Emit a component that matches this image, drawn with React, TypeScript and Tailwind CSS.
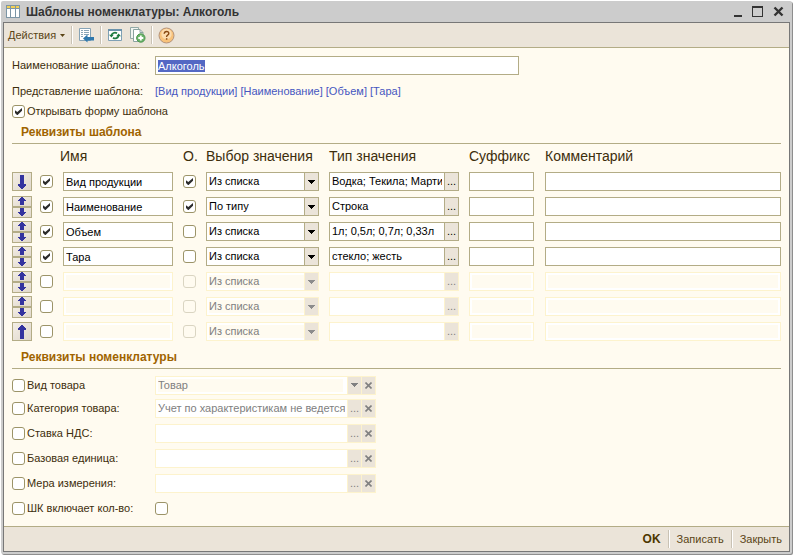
import { useEffect, useRef } from "react";
import clsx from "clsx";

interface TemplateRow {
  id: number;
  name: string;
  used: boolean;
  required: boolean;
  choice: string;
  type: string;
  disabled?: boolean;
}

interface ItemProp {
  label: string;
  value: string;
  picker: "list" | "dots";
}

const rows: TemplateRow[] = [
  { id: 1, name: "Вид продукции", used: true, required: true, choice: "Из списка", type: "Водка; Текила; Мартини" },
  { id: 2, name: "Наименование", used: true, required: true, choice: "По типу", type: "Строка" },
  { id: 3, name: "Объем", used: true, required: false, choice: "Из списка", type: "1л; 0,5л; 0,7л; 0,33л" },
  { id: 4, name: "Тара", used: true, required: false, choice: "Из списка", type: "стекло; жесть" },
  { id: 5, name: "", used: false, required: false, choice: "Из списка", type: "", disabled: true },
  { id: 6, name: "", used: false, required: false, choice: "Из списка", type: "", disabled: true },
  { id: 7, name: "", used: false, required: false, choice: "Из списка", type: "", disabled: true },
];

const itemProps: ItemProp[] = [
  { label: "Вид товара", value: "Товар", picker: "list" },
  { label: "Категория товара:", value: "Учет по характеристикам не ведется", picker: "dots" },
  { label: "Ставка НДС:", value: "", picker: "dots" },
  { label: "Базовая единица:", value: "", picker: "dots" },
  { label: "Мера измерения:", value: "", picker: "dots" },
];

const border = "border-[#b3ac86]";
const borderOff = "border-[#fdf3cd]";

function Triangle() {
  return (
    <svg width="7" height="4" viewBox="0 0 7 4" fill="currentColor" shapeRendering="crispEdges">
      <path d="M0 0h7v1H0zM1 1h5v1H1zM2 2h3v1H2zM3 3h1v1H3z" />
    </svg>
  );
}

function Cross() {
  return (
    <svg width="7" height="7" viewBox="0 0 7 7" fill="none" stroke="currentColor" strokeWidth="1.6">
      <path d="M.5.5l6 6M6.5.5l-6 6" />
    </svg>
  );
}

function CheckBox({ id, label, checked, disabled }: { id: string; label?: string; checked?: boolean; disabled?: boolean }) {
  return (
    <span className="relative block h-[13px] w-[13px] shrink-0">
      <input
        id={id}
        type="checkbox"
        aria-label={label}
        defaultChecked={checked}
        disabled={disabled}
        className="peer block h-[13px] w-[13px] appearance-none rounded-[3px] border border-[#9c9468] bg-white disabled:border-[#dad5c2] disabled:bg-[#fffbf0]"
      />
      <svg
        className="pointer-events-none absolute inset-0 hidden peer-checked:block"
        width="13"
        height="13"
        viewBox="0 0 13 13"
        fill="#2b2b2b"
      >
        <path d="M3 5.2l2.3 1.9L10 3v2.8L5.6 10H5L3 8z" />
      </svg>
    </span>
  );
}

// Solid blue arrow of the row move buttons
function MoveArrow({ dir, small }: { dir: "up" | "down"; small?: boolean }) {
  const h = small ? 8 : 14;
  const d = small
    ? "M3 0h2v1h1v1h1v1h1v1H6v4H2V4H0V3h1V2h1V1h1z"
    : "M3 0h2v1h1v1h1v1h1v2H6v9H2V5H0V3h1V2h1V1h1z";
  return (
    <svg
      width="8"
      height={h}
      viewBox={`0 0 8 ${h}`}
      fill="#33339f"
      className={dir === "down" ? "rotate-180" : ""}
    >
      <path d={d} />
    </svg>
  );
}

function MoveButton({ dir, small }: { dir: "up" | "down"; small?: boolean }) {
  return (
    <button
      type="button"
      aria-label={dir === "up" ? "Переместить вверх" : "Переместить вниз"}
      className={clsx(
        "flex w-5 items-center justify-center border border-[#b3ac86] bg-gradient-to-br from-[#f3eee6] to-[#e0d8cb]",
        small ? "h-[11px]" : "h-[19px]"
      )}
    >
      <MoveArrow dir={dir} small={small} />
    </button>
  );
}

function Moves({ index }: { index: number }) {
  if (index === 0) return <MoveButton dir="down" />;
  if (index === rows.length - 1) return <MoveButton dir="up" />;
  return (
    <div className="flex flex-col">
      <MoveButton dir="up" small />
      <MoveButton dir="down" small />
    </div>
  );
}

function TextField({ label, value, disabled }: { label: string; value?: string; disabled?: boolean }) {
  return (
    <input
      type="text"
      aria-label={label}
      defaultValue={value}
      disabled={disabled}
      className={clsx(
        "block h-[19px] w-full border px-[2px] text-black outline-none",
        disabled ? "bg-[#fffbf0] shadow-[inset_0_0_0_2px_white]" : "bg-white",
        disabled ? borderOff : border
      )}
    />
  );
}

function ChoiceField({ label, value, disabled }: { label: string; value: string; disabled?: boolean }) {
  return (
    <div className="relative">
      <select
        aria-label={label}
        defaultValue={value}
        disabled={disabled}
        className={clsx(
          "block h-[19px] w-full appearance-none border pl-[2px] pr-4 outline-none",
          disabled
            ? "bg-[#fffbf0] text-[#808080] opacity-100 shadow-[inset_0_0_0_2px_white]"
            : "bg-white text-black",
          disabled ? borderOff : border
        )}
      >
        <option>Из списка</option>
        <option>По типу</option>
      </select>
      <span
        className={clsx(
          "pointer-events-none absolute inset-y-px right-px flex w-[14px] items-center justify-center border-l bg-[#ebe4d9]",
          disabled ? "text-[#8c8c8c]" : "text-black",
          disabled ? borderOff : border
        )}
      >
        <Triangle />
      </span>
    </div>
  );
}

interface PickerProps {
  label: string;
  value: string;
  disabled?: boolean;
  picker?: "list" | "dots";
  clearable?: boolean;
}

function PickerField({ label, value, disabled, picker = "dots", clearable }: PickerProps) {
  const tone = disabled ? borderOff : border;
  const button = clsx(
    "flex w-[14px] shrink-0 items-center justify-center border-l bg-[#ebe4d9]",
    disabled ? "text-[#808080]" : "text-black",
    tone
  );
  return (
    <div className={clsx("flex h-[19px] border bg-white", tone)}>
      <input
        type="text"
        aria-label={label}
        defaultValue={value}
        disabled={disabled}
        className={clsx(
          "min-w-0 flex-1 border-r-2 border-white pl-[2px] outline-none",
          disabled ? "text-[#808080]" : "text-black",
          picker === "list" && "bg-[#fffbf0] shadow-[inset_0_0_0_2px_white]"
        )}
      />
      <button type="button" disabled={disabled} aria-label="Выбрать" className={button}>
        {picker === "list" ? <Triangle /> : "..."}
      </button>
      {clearable && (
        <button type="button" disabled={disabled} aria-label="Очистить" className={button}>
          <Cross />
        </button>
      )}
    </div>
  );
}

function Divider() {
  return <span className="h-[18px] w-[2px] shrink-0 border-r border-white bg-[#c9c2b4]" />;
}

function SectionTitle({ children }: { children: string }) {
  return (
    <h2 className="h-5 border-b border-[#b3ac86] pl-[9px] text-[12px] leading-4 font-bold text-[#a06400]">{children}</h2>
  );
}

function TitleBar() {
  return (
    <header className="flex h-[21px] items-center pr-[6px] pl-[3px] text-[#333333]">
      <svg width="14" height="13" viewBox="0 0 14 13" shapeRendering="crispEdges">
        <path fill="#7d96a6" d="M0 0h14v13H0z" />
        <path fill="#ffffff" d="M1 4h3v8H1zM5 4h4v8H5zM10 4h3v8h-3z" />
        <path fill="#f3cf55" d="M1 1h3v2H1zM5 1h4v2H5zM10 1h3v2h-3z" />
      </svg>
      <h1 className="ml-[6px] flex-1 text-[12px] leading-4 font-bold">Шаблоны номенклатуры: Алкоголь</h1>
      <div className="flex items-center gap-[10px]">
        <button type="button" aria-label="Свернуть" className="flex h-[11px] w-2 items-end">
          <span className="h-[2px] w-full bg-[#333333]" />
        </button>
        <button type="button" aria-label="Развернуть" className="h-[11px] w-[11px] border border-t-2 border-[#333333]" />
        <button type="button" aria-label="Закрыть окно">
          <svg width="11" height="11" viewBox="0 0 11 11" stroke="#333333" strokeWidth="2.4">
            <path d="M1.5 1.5l8 8M9.5 1.5l-8 8" />
          </svg>
        </button>
      </div>
    </header>
  );
}

function Toolbar() {
  return (
    <div className="flex h-[25px] items-center border-b border-[#b3ac86] bg-[#ebe4d9] pl-1 text-[#5a4416]">
      <button type="button" className="flex items-center gap-1">
        Действия
        <svg width="5" height="3" viewBox="0 0 5 3" fill="currentColor">
          <path d="M0 0h5L2.5 3z" />
        </svg>
      </button>
      <span className="ml-[6px] flex items-center gap-[5px]">
        <Divider />
        <button type="button" aria-label="Записать и закрыть">
          <svg width="17" height="16" viewBox="0 0 17 16">
            <path d="M1.5 1.500h11v12h-11z" fill="#fff" stroke="#86a3b6" />
            <path d="M3 3.500h2M6 3.500h5M3 5.500h2M6 5.500h5M3 7.500h2M6 7.500h5M3 9.500h2" stroke="#8aa6b8" />
            <path d="M5 11.500l4.500-4V10H16v3.500H9.500V15.500z" fill="#2f78ad" />
          </svg>
        </button>
        <Divider />
        <button type="button" aria-label="Обновить">
          <svg width="16" height="16" viewBox="0 0 16 16">
            <path d="M1.500 2.500h13v11h-13z" fill="#fff" stroke="#7fa0b5" />
            <path d="M1 2h14v2H1z" fill="#6b93ac" />
            <path d="M4.500 8.500A3.400 3 0 0 1 10 6.300M11.500 8.500A3.400 3 0 0 1 6 10.800" fill="none" stroke="#1c7a3e" strokeWidth="1.700" />
            <path d="M2 7.800h4.800L4.400 10.400zM9.200 9.200H14L11.600 6.600z" fill="#1c7a3e" />
          </svg>
        </button>
        <button type="button" aria-label="Добавить копированием" className="ml-[2px]">
          <svg width="16" height="16" viewBox="0 0 16 16">
            <path d="M.5.5h8v11h-8z" fill="#f1f5f1" stroke="#93aaa6" />
            <path d="M3.500 2.500h6.500l3 3v9h-9.500z" fill="#fff" stroke="#8aa39f" />
            <path d="M10 2.500v3h3" fill="none" stroke="#8aa39f" />
            <circle cx="10.800" cy="11" r="4.200" fill="#6bb46a" stroke="#4d9650" />
            <path d="M10.800 8.500v5M8.300 11h5" stroke="#fff" strokeWidth="1.800" />
          </svg>
        </button>
        <Divider />
        <button type="button" aria-label="Справка">
          <svg width="17" height="17" viewBox="0 0 17 17">
            <circle cx="8.500" cy="8.500" r="7.500" fill="#f8c27a" stroke="#b3937c" />
            <circle cx="8.500" cy="7" r="5.200" fill="#fcdcae" />
            <path d="M6.200 6.800q.2-2.300 2.400-2.300t2.200 1.900q0 1-1.200 1.700T8.600 10" fill="none" stroke="#8a4a12" strokeWidth="1.400" />
            <path d="M7.900 11.200h1.500v1.500H7.900z" fill="#8a4a12" />
          </svg>
        </button>
      </span>
    </div>
  );
}

export default function App() {
  const nameRef = useRef<HTMLInputElement>(null);

  // The form opens with the template name selected for editing
  useEffect(() => {
    nameRef.current?.focus();
    nameRef.current?.select();
  }, []);

  return (
    <div className="flex min-h-screen flex-col bg-white p-px font-['Liberation_Sans',Arial,sans-serif] text-[11px] leading-[13px] text-[#3d2e0c]">
      <div className="flex flex-1 flex-col rounded-[2px] bg-[#cccccc] px-[2px] pb-[2px] shadow-[1px_1px_0_#8e8e8e]">
        <TitleBar />
        <div className="flex flex-1 flex-col border border-[#777777] bg-[#fffbf0]">
          <Toolbar />

          <main className="flex-1 px-2 pt-2 pb-[5px]">
            <div className="flex items-center">
              <label htmlFor="template-name" className="w-[143px] shrink-0">
                Наименование шаблона:
              </label>
              <input
                id="template-name"
                ref={nameRef}
                type="text"
                defaultValue="Алкоголь"
                className="h-[19px] w-[364px] border border-[#b3ac86] bg-white px-[2px] text-black outline-none selection:bg-[#5468c4] selection:text-white"
              />
            </div>
            <div className="mt-2 flex h-4 items-center">
              <span className="w-[143px] shrink-0">Представление шаблона:</span>
              <a href="#template" className="text-[#4657c0]">
                [Вид продукции] [Наименование] [Объем] [Тара]
              </a>
            </div>
            <div className="mt-1 flex h-4 items-center gap-[2px]">
              <CheckBox id="open-form" checked />
              <label htmlFor="open-form">Открывать форму шаблона</label>
            </div>

            <section className="mt-[5px]">
              <SectionTitle>Реквизиты шаблона</SectionTitle>
              <table className="w-full table-fixed border-collapse">
                <colgroup>
                  <col className="w-7" />
                  <col className="w-[23px]" />
                  <col className="w-[120px]" />
                  <col className="w-[23px]" />
                  <col className="w-[123px]" />
                  <col className="w-[140px]" />
                  <col className="w-[76px]" />
                  <col />
                </colgroup>
                <thead>
                  <tr className="h-[25px] text-left text-[14px]">
                    <td className="p-0" />
                    <th colSpan={2} className="p-0 pl-5 font-normal">Имя</th>
                    <th className="p-0 font-normal">О.</th>
                    <th className="p-0 font-normal">Выбор значения</th>
                    <th className="p-0 font-normal">Тип значения</th>
                    <th className="p-0 font-normal">Суффикс</th>
                    <th className="p-0 font-normal">Комментарий</th>
                  </tr>
                </thead>
                <tbody>
                  {rows.map((row, i) => (
                    <tr key={row.id} className="h-[25px]">
                      <td className="p-0">
                        <Moves index={i} />
                      </td>
                      <td className="p-0">
                        <CheckBox id={`used-${row.id}`} label="Использовать" checked={row.used} />
                      </td>
                      <td className="p-0 pr-[10px]">
                        <TextField label="Имя" value={row.name} disabled={row.disabled} />
                      </td>
                      <td className="p-0">
                        <CheckBox
                          id={`required-${row.id}`}
                          label="Обязательный"
                          checked={row.required}
                          disabled={row.disabled}
                        />
                      </td>
                      <td className="p-0 pr-[10px]">
                        <ChoiceField label="Выбор значения" value={row.choice} disabled={row.disabled} />
                      </td>
                      <td className="p-0 pr-[10px]">
                        <PickerField label="Тип значения" value={row.type} disabled={row.disabled} />
                      </td>
                      <td className="p-0 pr-[11px]">
                        <TextField label="Суффикс" disabled={row.disabled} />
                      </td>
                      <td className="p-0">
                        <TextField label="Комментарий" disabled={row.disabled} />
                      </td>
                    </tr>
                  ))}
                </tbody>
              </table>
            </section>

            <section className="mt-[5px]">
              <SectionTitle>Реквизиты номенклатуры</SectionTitle>
              <div className="mt-[5px]">
                {itemProps.map((prop, i) => (
                  <div key={prop.label} className={clsx("flex items-center", i === 0 ? "h-[22px]" : "h-[25px]")}>
                    <div className="flex w-[143px] shrink-0 items-center gap-[2px]">
                      <CheckBox id={`prop-${i}`} />
                      <label htmlFor={`prop-${i}`}>{prop.label}</label>
                    </div>
                    <div className="w-[221px]">
                      <PickerField label={prop.label} value={prop.value} picker={prop.picker} disabled clearable />
                    </div>
                  </div>
                ))}
                <div className="flex h-[25px] items-center">
                  <div className="flex w-[143px] shrink-0 items-center gap-[2px]">
                    <CheckBox id="barcode" />
                    <label htmlFor="barcode">ШК включает кол-во:</label>
                  </div>
                  <CheckBox id="barcode-qty" label="Количество в штрихкоде" />
                </div>
              </div>
            </section>
          </main>

          <footer className="flex h-[25px] items-center justify-end gap-[7px] border-t border-[#b3ac86] bg-[#ebe4d9] pr-[7px] text-[#5a4416]">
            <button type="button" className="text-[12px] font-bold text-[#4d3700]">OK</button>
            <Divider />
            <button type="button">Записать</button>
            <Divider />
            <button type="button">Закрыть</button>
          </footer>
        </div>
      </div>
    </div>
  );
}
